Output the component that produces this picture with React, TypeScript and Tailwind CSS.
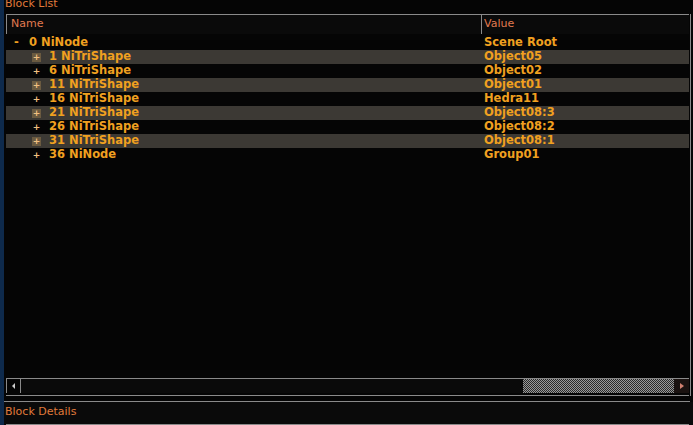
import React from 'react';

type Row = { id: number; type: string; value: string; depth: number; boxed?: boolean };

const rows: Row[] = [
  { id: 0, type: 'NiNode', value: 'Scene Root', depth: 0 },
  { id: 1, type: 'NiTriShape', value: 'Object05', depth: 1, boxed: true },
  { id: 6, type: 'NiTriShape', value: 'Object02', depth: 1 },
  { id: 11, type: 'NiTriShape', value: 'Object01', depth: 1, boxed: true },
  { id: 16, type: 'NiTriShape', value: 'Hedra11', depth: 1 },
  { id: 21, type: 'NiTriShape', value: 'Object08:3', depth: 1, boxed: true },
  { id: 26, type: 'NiTriShape', value: 'Object08:2', depth: 1 },
  { id: 31, type: 'NiTriShape', value: 'Object08:1', depth: 1, boxed: true },
  { id: 36, type: 'NiNode', value: 'Group01', depth: 1 },
];

const font = { fontFamily: 'Tahoma, "DejaVu Sans", sans-serif' };

function Expander({ open, boxed }: { open?: boolean; boxed?: boolean }) {
  if (open) return <span className="w-[9px] text-center text-[#f0a020]">-</span>;
  return (
    <span
      className={
        'w-[9px] h-[9px] flex items-center justify-center text-[9px] leading-none text-[#f0c080] ' +
        (boxed ? 'bg-[#6a5a40]' : '')
      }
    >
      +
    </span>
  );
}

export default function App() {
  return (
    <div className="w-[693px] h-[425px] bg-[#050505] flex overflow-hidden" style={font}>
      {/* bord gauche bleu */}
      <div className="w-[4px] bg-[#0e2a4c]" />

      <div className="flex-1 flex flex-col">
        {/* titre */}
        <div className="h-[14px] flex items-start pl-[1px]">
          <span className="text-[11px] leading-none -mt-[2px] text-[#e07a3a]">Block List</span>
        </div>

        <div className="flex">
          <div className="w-[683px] ml-[2px] flex flex-col">
            {/* en-tête */}
            <div className="h-[20px] flex border-t border-l border-[#8a8a8a] bg-[#0a0a0a]">
              <div className="w-[474px] pl-[4px] flex items-center text-[11px] text-[#e07a50]">Name</div>
              <div className="flex-1 border-l border-[#8a8a8a] pl-[2px] flex items-center text-[11px] text-[#e07a50]">
                Value
              </div>
            </div>

            {/* lignes */}
            <div className="h-[344px] pt-[2px] bg-[#050505]">
              {rows.map((r, i) => (
                <div
                  key={r.id}
                  className={
                    'h-[14px] flex items-center text-[11.5px] font-bold text-[#f0a020] ' +
                    (i % 2 === 1 ? 'bg-[#3c3934]' : '')
                  }
                >
                  <div className="w-[475px] flex items-center">
                    {r.depth === 0 ? (
                      <div className="flex items-center pl-[6px] gap-[8px]">
                        <Expander open />
                        <span>
                          {r.id} {r.type}
                        </span>
                      </div>
                    ) : (
                      <div className="flex items-center pl-[26px] gap-[8px]">
                        <Expander boxed={r.boxed} />
                        <span>
                          {r.id} {r.type}
                        </span>
                      </div>
                    )}
                  </div>
                  <div className="pl-[3px]">{r.value}</div>
                </div>
              ))}
            </div>

            {/* barre de défilement horizontale */}
            <div className="h-[15px] flex border-t border-[#8a8a8a]">
              <div className="w-[15px] border-l border-r border-[#8a8a8a] flex items-center justify-center">
                <span className="w-0 h-0 border-y-[3px] border-y-transparent border-r-[3px] border-r-[#cccccc]" />
              </div>
              <div className="w-[502px] bg-[#0a0a0a]" />
              <div
                className="flex-1 bg-[#777]"
                style={{
                  backgroundImage:
                    'repeating-conic-gradient(#9a9a9a 0% 25%, #2a2a2a 0% 50%)',
                  backgroundSize: '2px 2px',
                }}
              />
              <div className="w-[15px] flex items-center justify-center bg-[#1a1210]">
                <span className="w-0 h-0 border-y-[3px] border-y-transparent border-l-[4px] border-l-[#d08070]" />
              </div>
            </div>
            <div className="h-[2px]" />
            <div className="h-[1px] bg-[#8a8a8a]" />
          </div>
          <div className="w-[1px]" />
          <div className="w-[1px] bg-[#8a8a8a]" />
        </div>

        {/* séparateurs */}
        <div className="h-[5px]" />
        <div className="h-[1px] bg-[#8a8a8a] mr-[3px]" />

        {/* détails */}
        <div className="flex-1 bg-[#0a0a0a] flex flex-col">
          <div className="text-[11px] leading-none text-[#e07a3a] pt-[4px] pl-[1px]">Block Details</div>
          <div className="flex-1" />
          <div className="h-[1px] bg-[#8a8a8a] ml-[2px] mr-[4px]" />
        </div>
      </div>
    </div>
  );
}
